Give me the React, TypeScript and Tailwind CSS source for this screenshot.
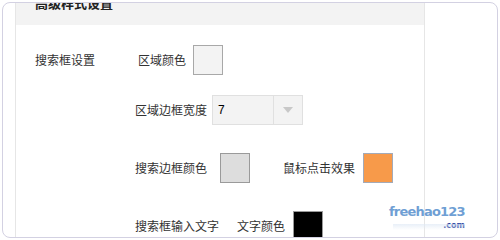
import React from "react";

const cjk = { fontFamily: '"Noto Sans CJK SC", "Noto Sans", sans-serif' };

function Swatch({ color, border }: { color: string; border: string }) {
  return <div className="h-[30px] w-[30px] shrink-0 border" style={{ backgroundColor: color, borderColor: border }} />;
}

export default function App() {
  return (
    <div className="relative h-[240px] w-[500px] overflow-hidden bg-white" style={cjk}>
      <div className="m-[2px] h-[236px] w-[496px] overflow-hidden rounded-[8px] border border-[#d3d1e2]">
        <div className="ml-[12px] flex h-full w-[410px] flex-col border-x border-[#e6e6e6]">
          <div className="h-[22px] shrink-0 overflow-hidden bg-[#f3f3f3] pl-[19px]">
            <div className="-mt-[8px] text-[13px] font-bold leading-[16px] text-[#222]">高级样式设置</div>
          </div>
          <div className="flex flex-col pl-[19px] pt-[20px] text-[12px] text-[#333]">
            <div className="flex h-[30px] items-center">
              <div className="w-[100px]">搜索框设置</div>
              <div className="ml-[3px]">区域颜色</div>
              <div className="ml-[7px]">
                <Swatch color="#f3f3f3" border="#a8a8a8" />
              </div>
            </div>
            <div className="mt-[20px] flex h-[30px] items-center">
              <div className="w-[100px]" />
              <div>区域边框宽度</div>
              <div className="ml-[5px] flex h-[30px] w-[91px] border border-[#e0e0e0] bg-[#f3f3f3]">
                <div className="flex flex-1 items-center pl-[5px] text-[12px] text-black" style={{ fontFamily: '"Liberation Sans", Arial, sans-serif' }}>7</div>
                <div className="flex w-[29px] items-center justify-center border-l border-[#e0e0e0]">
                  <svg width="10" height="6" viewBox="0 0 10 6">
                    <polygon points="0,0 10,0 5,6" fill="#c8c8c8" />
                  </svg>
                </div>
              </div>
            </div>
            <div className="mt-[28px] flex h-[30px] items-center">
              <div className="w-[100px]" />
              <div>搜索边框颜色</div>
              <div className="ml-[13px]">
                <Swatch color="#dddddd" border="#9a9a9a" />
              </div>
              <div className="ml-[33px]">鼠标点击效果</div>
              <div className="ml-[8px]">
                <Swatch color="#f79a4a" border="#a3aab8" />
              </div>
            </div>
            <div className="mt-[28px] flex h-[30px] items-center">
              <div className="w-[100px]" />
              <div>搜索框输入文字</div>
              <div className="ml-[18px]">文字颜色</div>
              <div className="ml-[8px]">
                <Swatch color="#000000" border="#9a9a9a" />
              </div>
            </div>
          </div>
        </div>
      </div>
      <div className="pointer-events-none absolute left-[389px] top-[204px] flex flex-col items-end" style={{ fontFamily: '"DejaVu Sans", sans-serif' }}>
        <div className="text-[13px] font-bold leading-[16px] tracking-[-0.8px] text-[#6f9fd4]">freehao123</div>
        <div className="mt-[1px] text-[8px] font-bold leading-[9px] text-[#1f3fa0]">.com</div>
        <div className="-mt-[6px] h-[6px] w-[72px] bg-gradient-to-b from-[#dfe9f5] to-transparent opacity-70" />
      </div>
    </div>
  );
}
